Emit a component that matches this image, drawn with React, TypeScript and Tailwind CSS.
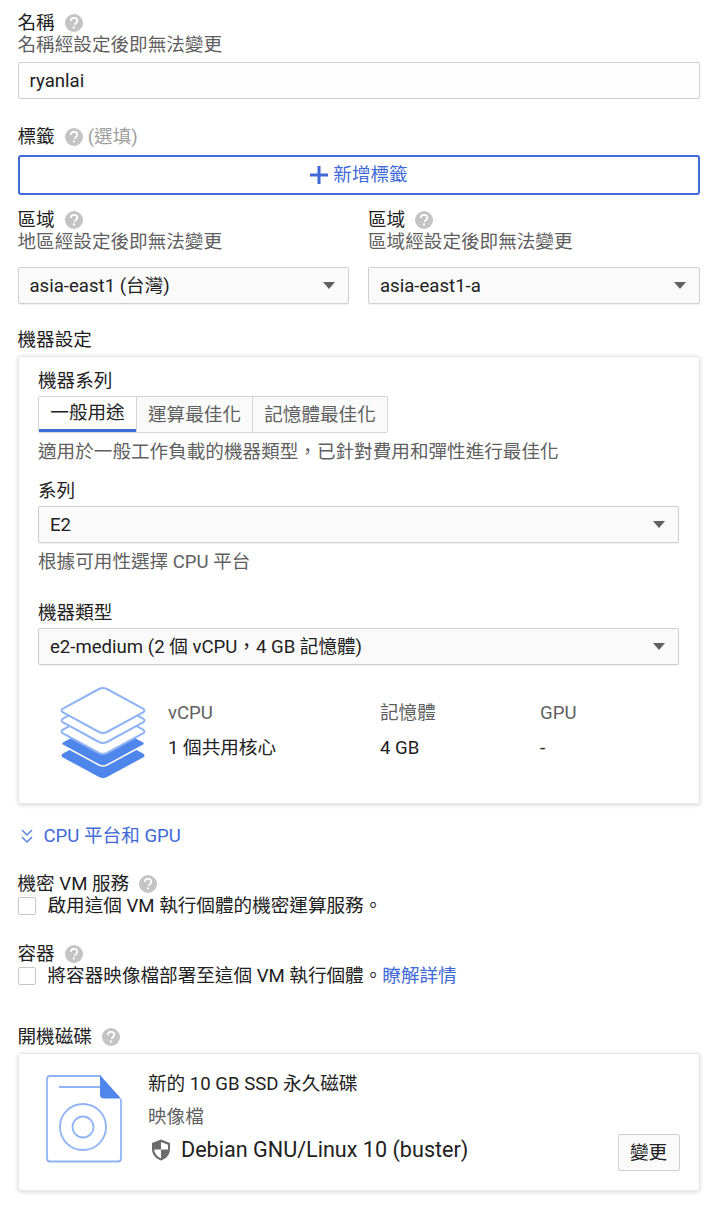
import React from "react";

function Help() {
  return (
    <svg viewBox="0 0 18 18" className="w-[18px] h-[18px] shrink-0">
      <circle cx="9" cy="9" r="9" fill="#c4c4c4" />
      <path d="M5.8 7c0-1.8 1.4-3.1 3.3-3.1s3.2 1.2 3.2 2.8c0 2.1-2.5 2.3-2.5 4.3" fill="none" stroke="#fff" strokeWidth="1.8" />
      <rect x="8.8" y="12.4" width="2" height="2" fill="#fff" transform="translate(-0.9 0)" />
    </svg>
  );
}

function Label({ children, className = "" }: { children: React.ReactNode; className?: string }) {
  return <div className={"flex items-center gap-[10px] h-[24px] text-[#212121] " + className}>{children}</div>;
}

function Select({ children }: { children: React.ReactNode }) {
  return (
    <div className="h-[37px] flex items-center justify-between pl-[11px] pr-[13px] bg-[#fafafa] border border-[#cfcfcf] rounded-[2px] text-[#212121] shadow-[0_1px_1px_rgba(0,0,0,0.06)]">
      <span>{children}</span>
      <span className="w-0 h-0 border-l-[6.5px] border-r-[6.5px] border-t-[7px] border-l-transparent border-r-transparent border-t-[#616161]" />
    </div>
  );
}

function Check() {
  return <span className="w-[18px] h-[18px] border border-[#c8c8c8] rounded-[2px] bg-white shrink-0" />;
}

function Stack() {
  const d = "M39 2 Q43 0 47 2 L83 21.5 Q86 23.5 83 25.5 L47 45 Q43 47 39 45 L3 25.5 Q0 23.5 3 21.5 Z";
  return (
    <svg viewBox="-1 -1 88 94" className="w-[88px] h-[94px] shrink-0">
      <path d={d} transform="translate(0 45)" fill="#4f86ec" />
      <path d={d} transform="translate(0 33)" fill="#4f86ec" stroke="#fff" strokeWidth="1.5" />
      <path d={d} transform="translate(0 21)" fill="#fff" stroke="#8fb4f5" strokeWidth="2" />
      <path d={d} transform="translate(0 10)" fill="#fff" stroke="#8fb4f5" strokeWidth="2" />
      <path d={d} fill="#fff" stroke="#8fb4f5" strokeWidth="2" />
    </svg>
  );
}

function DiskIcon() {
  return (
    <svg viewBox="0 0 76 88" className="w-[76px] h-[88px] shrink-0 mt-[3px]">
      <path d="M55 1 H4 Q1 1 1 4 V83.5 Q1 86.5 4 86.5 H72 Q75 86.5 75 83.5 V24" fill="none" stroke="#8fb4f5" strokeWidth="1.8" />
      <path d="M13 12 H54" stroke="#8fb4f5" strokeWidth="1.8" />
      <path d="M54 0 L75 23.5 H58 Q54 23.5 54 19.5 Z" fill="#4f86ec" />
      <circle cx="37" cy="52" r="23" fill="none" stroke="#8fb4f5" strokeWidth="1.8" />
      <circle cx="37" cy="52" r="10.5" fill="none" stroke="#8fb4f5" strokeWidth="1.8" />
    </svg>
  );
}

export default function App() {
  return (
    <div
      className="w-[720px] h-[1207px] bg-white pl-[17.5px] pr-[20.5px] pt-[11px] text-[18.6px] leading-[24px] text-[#212121] overflow-hidden"
      style={{ fontFamily: 'Roboto, "Noto Sans CJK TC", sans-serif' }}
    >
      <Label>名稱<Help /></Label>
      <div className="h-[21px] leading-[21px] text-[#5f5f5f]">名稱經設定後即無法變更</div>
      <div className="mt-[6px] h-[37px] flex items-center pl-[11px] bg-[#fdfdfd] border border-[#d0d0d0] rounded-[2px]">ryanlai</div>

      <Label className="mt-[26px]">
        標籤
        <span className="flex items-center gap-[5px] text-[#9e9e9e]"><Help />(選填)</span>
      </Label>
      <div className="mt-[6px] h-[40px] flex items-center justify-center gap-[4px] border-2 border-[#3f6ad8] rounded-[3px] text-[#3f6ad8]">
        <svg viewBox="0 0 20 20" className="w-[20px] h-[20px]"><path d="M10 1v18M1 10h18" stroke="#3f6ad8" strokeWidth="3" /></svg>
        新增標籤
      </div>

      <div className="mt-[13px] grid grid-cols-2 gap-x-[19px]">
        <div>
          <Label>區域<Help /></Label>
          <div className="h-[21px] leading-[21px] text-[#5f5f5f]">地區經設定後即無法變更</div>
          <div className="mt-[14px]"><Select>asia-east1 (台灣)</Select></div>
        </div>
        <div>
          <Label>區域<Help /></Label>
          <div className="h-[21px] leading-[21px] text-[#5f5f5f]">區域經設定後即無法變更</div>
          <div className="mt-[14px]"><Select>asia-east1-a</Select></div>
        </div>
      </div>

      <Label className="mt-[24px]">機器設定</Label>
      <div className="mt-[4px] h-[448px] border border-[#e8e8e8] rounded-[2px] px-[19.5px] pt-[12px] shadow-[0_1px_4px_rgba(0,0,0,0.16)]">
        <div className="h-[24px]">機器系列</div>
        <div className="mt-[3px] flex w-fit h-[37px] border border-[#d4d4d4] rounded-[2px] bg-[#fafafa]">
          <div className="w-[97px] flex items-center justify-center bg-white border-b-[3px] border-[#3b6fd8]">一般用途</div>
          <div className="w-[116px] flex items-center justify-center border-l border-[#d4d4d4] text-[#5f5f5f]">運算最佳化</div>
          <div className="w-[135px] flex items-center justify-center border-l border-[#d4d4d4] text-[#5f5f5f]">記憶體最佳化</div>
        </div>
        <div className="mt-[7px] h-[24px] text-[#5f5f5f]">適用於一般工作負載的機器類型，已針對費用和彈性進行最佳化</div>
        <div className="mt-[15px] h-[24px]">系列</div>
        <div className="mt-[3px]"><Select>E2</Select></div>
        <div className="mt-[7px] h-[24px] text-[#5f5f5f]">根據可用性選擇 CPU 平台</div>
        <div className="mt-[27px] h-[24px]">機器類型</div>
        <div className="mt-[3px]"><Select>e2-medium (2 個 vCPU，4 GB 記憶體)</Select></div>
        <div className="mt-[21px] flex">
          <div className="ml-[21px] w-[109px]"><Stack /></div>
          <div className="w-[212px] pt-[15px]">
            <div className="text-[#5f5f5f]">vCPU</div>
            <div className="mt-[11px]">1 個共用核心</div>
          </div>
          <div className="w-[160px] pt-[15px]">
            <div className="text-[#5f5f5f]">記憶體</div>
            <div className="mt-[11px]">4 GB</div>
          </div>
          <div className="pt-[15px]">
            <div className="text-[#5f5f5f]">GPU</div>
            <div className="mt-[11px]">-</div>
          </div>
        </div>
      </div>

      <div className="mt-[20px] h-[24px] flex items-center gap-[9px] text-[#3f6ad8]">
        <svg viewBox="0 0 16 16" className="w-[16px] h-[16px] ml-[1px]"><path d="M3 2l5 5 5-5M3 9l5 5 5-5" fill="none" stroke="#5b85e0" strokeWidth="1.5" /></svg>
        CPU 平台和 GPU
      </div>

      <Label className="mt-[24px]">機密 VM 服務<Help /></Label>
      <div className="h-[20px] flex items-center gap-[12px]"><Check />啟用這個 VM 執行個體的機密運算服務。</div>

      <Label className="mt-[26px]">容器<Help /></Label>
      <div className="h-[20px] flex items-center gap-[12px]">
        <Check />
        <span>將容器映像檔部署至這個 VM 執行個體。<span className="text-[#3f6ad8]">瞭解詳情</span></span>
      </div>

      <Label className="mt-[39px]">開機磁碟<Help /></Label>
      <div className="mt-[4px] h-[138px] border border-[#e8e8e8] rounded-[2px] shadow-[0_1px_4px_rgba(0,0,0,0.16)] flex pl-[27.5px] pr-[19px] pt-[18px]">
        <DiskIcon />
        <div className="ml-[26px] flex-1">
          <div className="h-[24px]">新的 10 GB SSD 永久磁碟</div>
          <div className="mt-[9px] h-[24px] text-[#5f5f5f]">映像檔</div>
          <div className="mt-[9px] flex items-center gap-[8px] text-[21.6px]">
            <svg viewBox="0 0 24 24" className="w-[24px] h-[24px] ml-[1px]">
              <path d="M12 1.5 L3 5 V11 C3 16.5 7 21 12 22.5 C17 21 21 16.5 21 11 V5 Z" fill="#6b6b6b" />
              <path d="M12 4 L19 6.7 V11.5 H12 Z M12 11.5 V20.3 C8.5 19 5.8 15.7 5.1 11.5 Z" fill="#fff" />
            </svg>
            Debian GNU/Linux 10 (buster)
          </div>
        </div>
        <div className="self-end mb-[19px] w-[62px] h-[37px] flex items-center justify-center bg-[#fafafa] border border-[#cfcfcf] rounded-[2px]">變更</div>
      </div>
    </div>
  );
}
